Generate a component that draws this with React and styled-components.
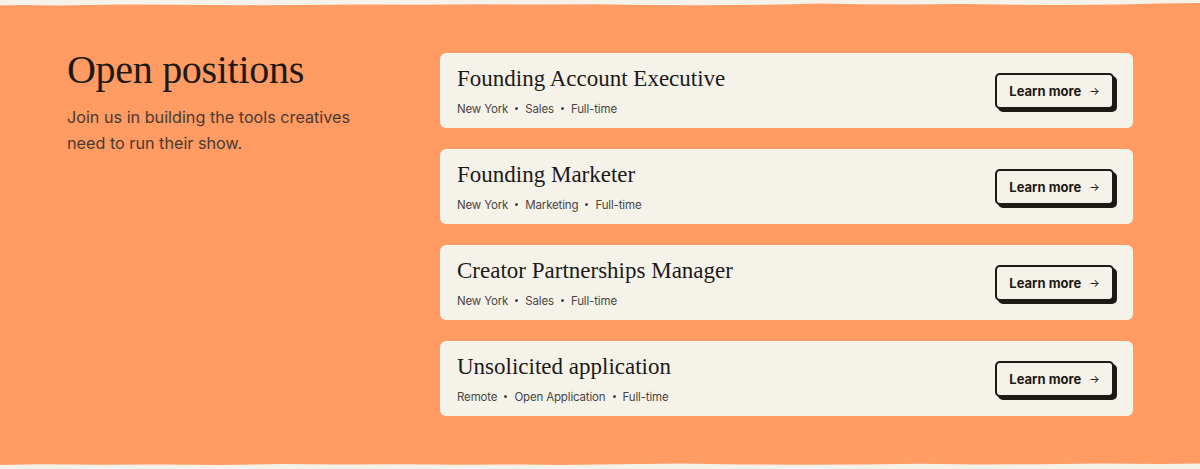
import React from "react"
import styled, { createGlobalStyle } from "styled-components"

const GlobalStyle = createGlobalStyle`
  html, body { margin: 0; padding: 0; background: #f5f2ea; }
  * { box-sizing: border-box; }
`

const sans = `"Inter", "DejaVu Sans", sans-serif`
const serif = `"Liberation Serif", "DejaVu Serif", serif`

const Section = styled.section`
  background: #ff9b63;
  width: 1200px;
  height: 469px;
  display: flex;
  flex-direction: column;
  overflow: hidden;
`

const Edge = styled.svg`
  display: block;
  width: 100%;
  height: 10px;
  flex: none;
`

const Content = styled.div`
  flex: 1;
  display: grid;
  grid-template-columns: 373px 1fr;
  padding: 43px 67px 0 67px;
`

const Intro = styled.div`
  display: flex;
  flex-direction: column;
  margin-top: -3px;
`

const Heading = styled.h2`
  margin: 0;
  font-family: ${serif};
  font-weight: 400;
  font-size: 40px;
  line-height: 40px;
  color: #1d1a16;
  letter-spacing: -0.3px;
`

const Lead = styled.p`
  margin: 14px 0 0;
  font-family: ${sans};
  font-size: 16.2px;
  line-height: 26px;
  color: #4a3a30;
  width: 300px;
`

const List = styled.div`
  display: flex;
  flex-direction: column;
  gap: 21px;
`

const Card = styled.div`
  height: 75px;
  background: #f5f2ea;
  border-radius: 6px;
  display: flex;
  align-items: center;
  justify-content: space-between;
  padding: 0 16px 0 17px;
`

const Info = styled.div`
  display: flex;
  flex-direction: column;
  gap: 8px;
`

const Title = styled.h3`
  margin: 0;
  font-family: ${serif};
  font-weight: 400;
  font-size: 23px;
  line-height: 28px;
  color: #1d1a16;
`

const Meta = styled.div`
  display: flex;
  align-items: center;
  gap: 7px;
  font-family: ${sans};
  font-size: 11.5px;
  letter-spacing: -0.15px;
  line-height: 16px;
  color: #4a4540;
`

const Dot = styled.span`
  width: 3px;
  height: 3px;
  border-radius: 50%;
  background: #4a4540;
`

const Button = styled.button`
  width: 119px;
  height: 36px;
  margin-right: 3px;
  background: #f5f2ea;
  border: 2px solid #1d1a16;
  border-radius: 5px;
  box-shadow: 3px 3px 0 #1d1a16;
  font-family: ${sans};
  font-weight: 700;
  font-size: 13px;
  color: #1d1a16;
  display: flex;
  align-items: center;
  justify-content: center;
  gap: 8px;
  cursor: pointer;
  padding: 0;
`

const Arrow = styled.span`
  font-size: 11px;
  font-weight: 400;
`

const jobs = [
  { title: "Founding Account Executive", meta: ["New York", "Sales", "Full-time"] },
  { title: "Founding Marketer", meta: ["New York", "Marketing", "Full-time"] },
  { title: "Creator Partnerships Manager", meta: ["New York", "Sales", "Full-time"] },
  { title: "Unsolicited application", meta: ["Remote", "Open Application", "Full-time"] },
]

function TopEdge() {
  return (
    <Edge viewBox="0 0 1200 10" preserveAspectRatio="none">
      <path
        fill="#f5f2ea"
        d="M0 0 H1200 V3 L1160 3.5 L1120 4.5 L1060 5 L1000 4.5 L960 4 L900 4.6 L860 4.2 L820 3.6 L780 4.5 L700 5.2 L640 5 L600 4.2 L540 4.6 L480 4.2 L420 4.8 L360 4.4 L300 4.9 L240 5.2 L180 4.8 L120 4.4 L60 5.6 L20 5 L0 5.4 Z"
      />
    </Edge>
  )
}

function BottomEdge() {
  return (
    <Edge viewBox="0 0 1200 10" preserveAspectRatio="none">
      <path
        fill="#f5f2ea"
        d="M0 6 L40 5.2 L100 5.8 L160 5.4 L220 5.9 L280 5.1 L340 5.6 L400 5.3 L460 5.8 L520 5.5 L560 5.9 L620 5.2 L680 4.6 L740 5.4 L800 5.8 L860 5.4 L920 4.8 L980 5.6 L1040 5.2 L1100 4.5 L1160 4.9 L1200 4.4 V10 H0 Z"
      />
    </Edge>
  )
}

function JobCard({ title, meta }) {
  return (
    <Card>
      <Info>
        <Title>{title}</Title>
        <Meta>
          {meta.map((m, i) => (
            <React.Fragment key={m}>
              {i > 0 && <Dot />}
              <span>{m}</span>
            </React.Fragment>
          ))}
        </Meta>
      </Info>
      <Button>
        Learn more <Arrow>→</Arrow>
      </Button>
    </Card>
  )
}

export default function App() {
  return (
    <>
      <GlobalStyle />
      <Section>
        <TopEdge />
        <Content>
          <Intro>
            <Heading>Open positions</Heading>
            <Lead>Join us in building the tools creatives need to run their show.</Lead>
          </Intro>
          <List>
            {jobs.map((j) => (
              <JobCard key={j.title} {...j} />
            ))}
          </List>
        </Content>
        <BottomEdge />
      </Section>
    </>
  )
}
